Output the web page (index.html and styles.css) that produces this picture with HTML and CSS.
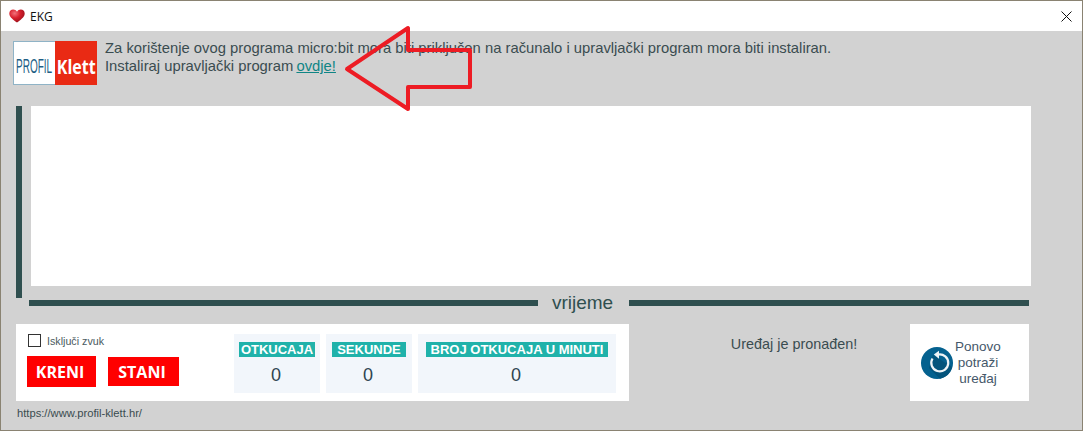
FILE: index.html
```html
<!DOCTYPE html>
<html lang="hr">
<head>
  <meta charset="UTF-8">
  <title>EKG</title>
  <link rel="stylesheet" href="styles.css">
</head>
<body>
  <div class="window">

    <!-- naslovna traka -->
    <div class="titlebar">
      <svg class="heart" width="16" height="14" viewBox="0 0 16 14">
        <defs>
          <radialGradient id="heartFill" cx="35%" cy="30%" r="80%">
            <stop offset="0" stop-color="#f2737b"/>
            <stop offset="0.45" stop-color="#d81f2c"/>
            <stop offset="1" stop-color="#8e0f18"/>
          </radialGradient>
        </defs>
        <path d="M8 13.500C5 11 .3 8.200 .3 4.400 .3 2 2.100 .4 4.200 .4 5.800 .4 7.200 1.300 8 2.700 8.800 1.300 10.200 .4 11.800 .4 13.900 .4 15.700 2 15.700 4.400 15.700 8.200 11 11 8 13.500Z" fill="url(#heartFill)"/>
      </svg>
      <span class="title">EKG</span>
      <svg class="close" width="11" height="11" viewBox="0 0 11 11">
        <path d="M.5 .5L10.500 10.500M10.500 .5L.5 10.500" stroke="#111" stroke-width="1" fill="none"/>
      </svg>
    </div>

    <div class="content">
      <!-- zaglavlje -->
      <div class="header">
        <div class="logo">
          <div class="logo-left"><span>PROFIL</span></div>
          <div class="logo-right"><span>Klett</span></div>
        </div>
        <p class="intro">
          Za korištenje ovog programa micro:bit mora biti priključen na računalo i upravljački program mora biti instaliran.<br>
          Instaliraj upravljački program <a href="#">ovdje!</a>
        </p>
      </div>

      <!-- graf -->
      <div class="chart">
        <div class="y-axis"></div>
        <div class="plot"></div>
      </div>
      <div class="x-axis">
        <div class="x-line first"></div>
        <span class="x-label">vrijeme</span>
        <div class="x-line second"></div>
      </div>

      <!-- kontrole -->
      <div class="controls">
        <div class="panel">
          <div class="actions">
            <label class="mute"><span class="box"></span>Isključi zvuk</label>
            <div class="buttons">
              <button class="btn start">KRENI</button>
              <button class="btn stop">STANI</button>
            </div>
          </div>
          <div class="stat small">
            <span class="stat-name tight">OTKUCAJA</span>
            <span class="stat-value">0</span>
          </div>
          <div class="stat small">
            <span class="stat-name">SEKUNDE</span>
            <span class="stat-value">0</span>
          </div>
          <div class="stat wide">
            <span class="stat-name">BROJ OTKUCAJA U MINUTI</span>
            <span class="stat-value">0</span>
          </div>
        </div>
        <div class="status">Uređaj je pronađen!</div>
        <div class="retry">
          <svg class="retry-icon" width="32" height="32" viewBox="0 0 32 32">
            <circle cx="16" cy="16" r="16" fill="#04618f"/>
            <path d="M12 8L31 20A16 16 0 0 1 19 31.700L8 21Z" fill="#03547c"/>
            <path d="M11.500 11.500A8.500 8.500 0 1 0 17 7.600" fill="none" stroke="#eef4f7" stroke-width="2.200"/>
            <path d="M18 3.800L18 11.800L12.800 7.600Z" fill="#eef4f7"/>
          </svg>
          <span class="retry-text">Ponovo<br>potraži<br>uređaj</span>
        </div>
      </div>

      <div class="footer">https://www.profil-klett.hr/</div>
    </div>

    <!-- strelica preko teksta -->
    <svg class="arrow" width="132" height="88" viewBox="0 0 132 88">
      <path d="M4 44L65 3V25H127V62H65V84Z" fill="none" stroke="#ed1c24" stroke-width="4" stroke-linejoin="round"/>
    </svg>
  </div>
</body>
</html>
```

FILE: styles.css
```css
html, body {
  margin: 0;
  padding: 0;
}
body {
  font-family: "Liberation Sans", Arial, sans-serif;
  color: #3a4c50;
}
.window {
  position: relative;
  width: 1083px;
  height: 431px;
  box-sizing: border-box;
  border: 1px solid #8a8372;
  background-color: #d2d2d2;
  overflow: hidden;
}

/* naslovna traka */
.titlebar {
  height: 30px;
  background-color: #fff;
  display: flex;
  align-items: center;
  padding: 0 10px 0 8px;
}
.heart {
  margin-right: 5px;
}
.title {
  font-family: "Open Sans", sans-serif;
  font-size: 12px;
  color: #111;
}
.close {
  margin-left: auto;
}

/* zaglavlje */
.header {
  display: flex;
  padding: 10px 0 0 12px;
  height: 75px;
  box-sizing: border-box;
}
.logo {
  display: flex;
  width: 84px;
  height: 44px;
}
.logo-left {
  width: 42px;
  box-sizing: border-box;
  background-color: #fff;
  border: 1px solid #8fb3c6;
  border-right: none;
  display: flex;
  align-items: center;
  justify-content: center;
  padding-top: 6px;
}
.logo-left span {
  font-size: 20px;
  color: #1f5f86;
  transform: scaleX(0.5);
}
.logo-right {
  width: 42px;
  background-color: #e92a14;
  color: #fff;
  font-family: "Open Sans", sans-serif;
  font-weight: 700;
  font-size: 20px;
  display: flex;
  align-items: center;
  justify-content: center;
  padding-top: 6px;
  box-sizing: border-box;
}
.logo-right span {
  transform: scaleX(0.8);
}
.intro {
  margin: -2px 0 0 8px;
  font-size: 14.8px;
  line-height: 18px;
}
.intro a {
  color: #0f8585;
  margin-left: -1px;
}

/* graf */
.chart {
  display: flex;
  padding-left: 15px;
  height: 194px;
}
.y-axis {
  width: 6px;
  height: 192px;
  background-color: #2f4f4f;
}
.plot {
  width: 1000px;
  height: 180px;
  margin-left: 9px;
  background-color: #fff;
}
.x-axis {
  display: flex;
  align-items: center;
  padding-left: 28px;
  height: 6px;
}
.x-line {
  height: 6px;
  background-color: #2f4f4f;
}
.x-line.first {
  width: 509px;
}
.x-line.second {
  width: 400px;
}
.x-label {
  width: 91px;
  box-sizing: border-box;
  padding-right: 2px;
  text-align: center;
  font-size: 19px;
  color: #2f4f4f;
}

/* kontrole */
.controls {
  display: flex;
  padding: 18px 0 0 15px;
}
.panel {
  width: 613px;
  height: 77px;
  box-sizing: border-box;
  background-color: #fff;
  display: flex;
  padding: 10px 0 8px 11px;
}
.actions {
  width: 207px;
}
.mute {
  display: flex;
  align-items: center;
  font-size: 10.7px;
  color: #4a5a60;
  height: 13px;
  padding-left: 1px;
}
.box {
  width: 11px;
  height: 11px;
  border: 1px solid #333;
  margin-right: 6px;
}
.buttons {
  display: flex;
  align-items: center;
  margin-top: 9px;
  gap: 12px;
}
.btn {
  border: none;
  padding: 0 3px 0 0;
  background-color: #f00;
  color: #fff;
  font-family: "Open Sans", sans-serif;
  font-weight: 700;
  font-size: 16px;
}
.start {
  width: 69px;
  height: 31px;
}
.stop {
  width: 71px;
  height: 29px;
}
.stat {
  height: 59px;
  background-color: #f2f6fb;
  margin-right: 6px;
  display: flex;
  flex-direction: column;
  align-items: center;
  padding-top: 8px;
  box-sizing: border-box;
}
.stat.small {
  width: 86px;
}
.stat.wide {
  width: 198px;
}
.stat-name {
  background-color: #20b2aa;
  color: #fff;
  font-weight: 700;
  font-size: 13px;
  line-height: 15px;
  padding: 0 5px;
}
.stat-name.tight {
  padding: 0 2px;
}
.stat-value {
  margin-top: 8px;
  padding-right: 2px;
  font-size: 18px;
  line-height: 21px;
  color: #2f4450;
}
.status {
  width: 281px;
  text-align: center;
  font-size: 14.4px;
  padding-top: 12px;
  box-sizing: border-box;
  padding-left: 49px;
  padding-right: 0;
}
.retry {
  width: 119px;
  height: 77px;
  background-color: #fff;
  display: flex;
  align-items: center;
  padding-left: 11px;
  box-sizing: border-box;
}
.retry-text {
  font-size: 13.5px;
  line-height: 16px;
  text-align: center;
  width: 50px;
  color: #45586a;
}
.footer {
  font-size: 11.2px;
  padding: 6px 0 0 16px;
}

/* strelica */
.arrow {
  position: absolute;
  left: 342px;
  top: 24px;
}
```
